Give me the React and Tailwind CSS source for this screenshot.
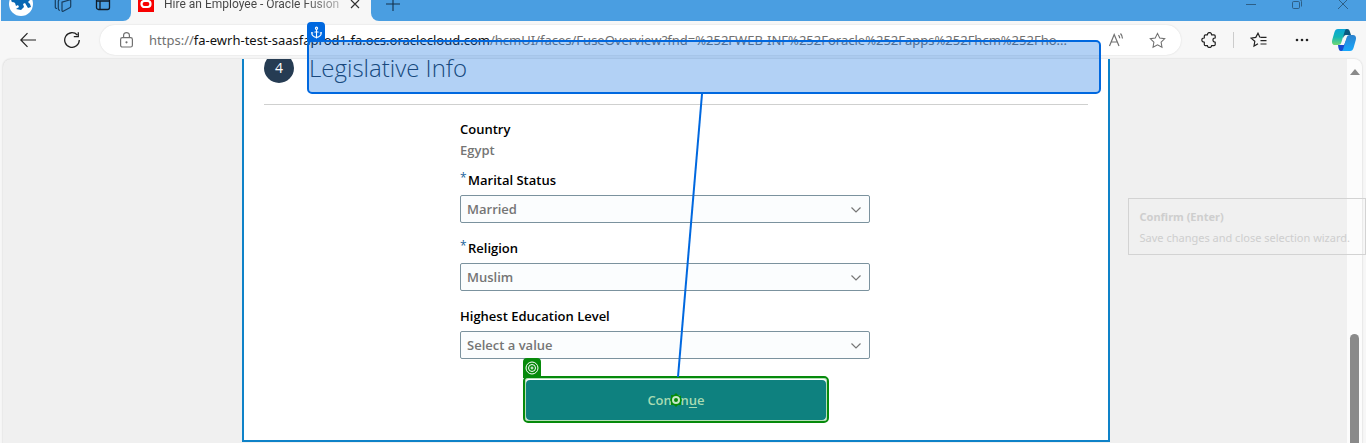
import React from "react";
import { Anchor } from "lucide-react";

const iconButton = "flex h-8 w-8 shrink-0 items-center justify-center";

function TabStrip() {
  return (
    <header className="flex h-[21px] items-end overflow-hidden bg-[#f7f7f7] pl-px">
      <div className="flex h-[34px] w-[130px] shrink-0 items-center gap-3 rounded-br-lg bg-[#4a9ee1] pl-2">
        <button aria-label="Profile" className="mr-1 h-6 w-6 shrink-0 overflow-hidden rounded-full bg-white">
          <svg viewBox="0 0 24 24" className="h-6 w-6">
            <path d="M2 9c2 2 3 1 4 2l1 3 2-1 1 2-3 2 5 1 3-3-1-3 2-1 3 5 3-1-1-3-2-2 2-2-3-5H6z" fill="#0868b4" />
          </svg>
        </button>
        <button aria-label="Workspaces" className="flex w-7 justify-center">
          <svg viewBox="0 0 18 18" className="h-[18px] w-[18px]" fill="none" stroke="#193f60" strokeWidth="1.2">
            <path d="M8 7.2 15.5 5c.7-.2 1.200.2 1.200.8v5.400c0 .8-.3 1.200-1 1.500l-6.500 3.500c-.7.3-1.200 0-1.200-.7V8c0-.4 0-.7 0-.8Z" />
            <path d="M6 15.300c-1.200 0-1.700-.5-1.700-1.500V6.500c0-1 .5-1.700 1.500-2L11 3M3 13.500c-1.200 0-1.700-.5-1.700-1.500V5c0-1 .5-1.700 1.500-2L7 1.500" />
          </svg>
        </button>
        <button aria-label="Tab actions" className="flex w-7 justify-center">
          <svg viewBox="0 0 16 16" className="h-4 w-4" fill="none" stroke="#101c28" strokeWidth="1.300">
            <rect x="1.500" y="1.500" width="13" height="12" rx="2" />
            <path d="M1.500 5h13M5 5v8.500" />
          </svg>
        </button>
      </div>
      <div className="flex h-[34px] w-60 shrink-0 items-center bg-[#f7f7f7] pl-[7px]">
        <svg viewBox="0 0 16 16" className="h-4 w-4 shrink-0">
          <rect width="16" height="16" fill="#f80000" />
          <rect x="3.500" y="5" width="9" height="6" rx="3" fill="none" stroke="#fff" strokeWidth="2.200" />
        </svg>
        <span className="ml-2.5 w-[186px] shrink-0 bg-linear-to-r from-[#444] from-75% to-[#444]/20 bg-clip-text font-[Roboto,sans-serif] text-[12px] leading-5 whitespace-nowrap text-transparent">
          Hire an Employee - Oracle Fusion
        </span>
        <button aria-label="Close tab">
          <svg viewBox="0 0 10 10" className="h-2.5 w-2.5" stroke="#333" strokeWidth="1.200">
            <path d="m1 1 8 8M9 1 1 9" />
          </svg>
        </button>
      </div>
      <div className="flex h-[34px] min-w-0 flex-1 items-center rounded-bl-lg bg-[#4a9ee1] pr-[18px] pl-[15px]">
        <button aria-label="New tab">
          <svg viewBox="0 0 14 14" className="h-3.5 w-3.5" stroke="#14314b" strokeWidth="1.100">
            <path d="M7 0v14M0 7h14" />
          </svg>
        </button>
        <div className="ml-auto flex items-center gap-9">
          <button aria-label="Minimize">
            <svg viewBox="0 0 10 10" className="h-2.5 w-2.5" stroke="#2d5f87"><path d="M0 5.500h10" /></svg>
          </button>
          <button aria-label="Restore">
            <svg viewBox="0 0 10 10" className="h-2.5 w-2.5" fill="none" stroke="#2d5f87">
              <rect x=".5" y="2.500" width="7" height="7" rx="1.200" />
              <path d="M2.500.5h5a2 2 0 0 1 2 2v5" />
            </svg>
          </button>
          <button aria-label="Close window">
            <svg viewBox="0 0 10 10" className="h-2.5 w-2.5" stroke="#2d5f87"><path d="m0 0 10 10M10 0 0 10" /></svg>
          </button>
        </div>
      </div>
    </header>
  );
}

const starPath = "m8 1.300 2.100 4.300 4.700.7-3.400 3.300.8 4.700L8 12.100l-4.200 2.200.8-4.700L1.200 6.300l4.700-.7Z";

function Toolbar() {
  return (
    <nav className="flex h-[38px] items-center bg-[#f7f7f7] pr-1.5 pl-3">
      <button aria-label="Back" className={iconButton}>
        <svg viewBox="0 0 16 16" className="h-4 w-4" fill="none" stroke="#222" strokeWidth="1.200">
          <path d="M16 8H.8M7.500 1.200.8 8l6.700 6.800" />
        </svg>
      </button>
      <button aria-label="Refresh" className={`${iconButton} ml-3`}>
        <svg viewBox="0 0 16 16" className="h-4 w-4" fill="none" stroke="#222" strokeWidth="1.300">
          <path d="M13.300 3A7.300 7.300 0 1 0 15.300 8M14.300.3v4.400H9.800" />
        </svg>
      </button>
      <div className="ml-3 flex h-[30px] min-w-0 flex-1 items-center rounded-full bg-white pr-2 pl-5 shadow-[0_0_2px_#0002]">
        <svg viewBox="0 0 13 16" className="h-4 w-[13px] shrink-0" fill="none" stroke="#707070" strokeWidth="1.200">
          <rect x=".6" y="5.600" width="11.800" height="9.400" rx="1.800" />
          <path d="M3.600 5.600V3.300c0-3.500 5.800-3.500 5.800 0v2.300" />
          <circle cx="6.500" cy="10.300" r=".5" fill="#555" />
        </svg>
        <div className="ml-4 min-w-0 flex-1 font-['Noto_Sans',sans-serif] text-[13px] leading-5 whitespace-nowrap text-[#707070]">
          https://<span className="text-[#111]">fa-ewrh-test-saasfaprod1.fa.ocs.oraclecloud.com</span>/hcmUI/faces/FuseOverview?fnd=%252FWEB-INF%252Foracle%252Fapps%252Fhcm%252Fho...
        </div>
        <button aria-label="Read aloud" className={iconButton}>
          <svg viewBox="0 0 18 16" className="h-4 w-[18px]" fill="none" stroke="#707070" strokeWidth="1.200">
            <path d="m1.500 14 4.700-11.500L11 14M3.200 10h6M10.500 3.200a5 5 0 0 1 1.200 3M12.500 1.500a8 8 0 0 1 2 5" />
          </svg>
        </button>
        <button aria-label="Add to favorites" className={`${iconButton} ml-2`}>
          <svg viewBox="0 0 16 16" className="h-[17px] w-[17px]" fill="none" stroke="#707070"><path d={starPath} /></svg>
        </button>
      </div>
      <button aria-label="Extensions" className={`${iconButton} ml-3`}>
        <svg viewBox="0 0 16 16" className="h-4 w-4" fill="none" stroke="#222" strokeWidth="1.200" strokeLinejoin="round">
          <path d="M4.500 2.800h2c-.3-3 4.300-3 4 0H13c.8 0 1.200.4 1.200 1.200v2c-3-.3-3 4.300 0 4v2.500c0 .8-.4 1.200-1.200 1.200h-2.500c.3 2.200-4.300 2.200-4 0h-2c-.8 0-1.200-.4-1.200-1.200V10c-3.300.3-3.300-4.300 0-4V4c0-.8.4-1.200 1.200-1.200Z" />
        </svg>
      </button>
      <span className="mx-2 h-4 w-px bg-[#ccc]" />
      <button aria-label="Favorites" className={iconButton}>
        <svg viewBox="0 0 17 16" className="h-4 w-[17px]" fill="none" stroke="#222" strokeWidth="1.200">
          <path d="M10 5.400 8 1.200 5.800 5.400 1 6.100l3.800 3.200L4 14l4-2.300M10.500 5.400h6M10.500 8.700h6M10.500 12h6" />
        </svg>
      </button>
      <button aria-label="Settings and more" className={`${iconButton} ml-3`}>
        <svg viewBox="0 0 14 4" className="h-1 w-3.5" fill="#222">
          <circle cx="2" cy="2" r="1.300" /><circle cx="7" cy="2" r="1.300" /><circle cx="12" cy="2" r="1.300" />
        </svg>
      </button>
      <button aria-label="Copilot" className={`${iconButton} ml-2.5`}>
        <svg viewBox="0 0 24 22" className="h-[22px] w-6">
          <defs>
            <linearGradient id="copilotLeft" x1="0" y1="0" x2="0" y2="1">
              <stop stopColor="#0aa5d8" /><stop offset=".5" stopColor="#12b7b5" /><stop offset="1" stopColor="#72d873" />
            </linearGradient>
            <linearGradient id="copilotRight" x1="0" y1="0" x2="0" y2="1">
              <stop stopColor="#2c82cd" /><stop offset="1" stopColor="#16a8fd" />
            </linearGradient>
          </defs>
          <path d="M10 0h5c2 0 2.500 1 3 3l1 3h-5c-1.500 0-2 1-2.500 3Z" fill="#08577e" />
          <path d="M6 16h6l3-7 1 10c-.5 2-1.500 3-3 3H9c-2 0-2.500-2-3-6Z" fill="#174bd0" />
          <path d="M6 0h9c-1.500 0-2 1-2.500 3L9.500 13c-.6 2-1.200 3-3.500 3H3c-2.500 0-3.500-2-2.800-5L2.500 3C3.200 1 4 0 6 0Z" fill="url(#copilotLeft)" />
          <path d="M18 22H9c1.500 0 2-1 2.500-3l3-10c.6-2 1.200-3 3.500-3h3c2.500 0 3.500 2 2.800 5l-2.300 8c-.7 2-1.500 3-3.500 3Z" fill="url(#copilotRight)" />
        </svg>
      </button>
    </nav>
  );
}

function SelectField({ id, label, value, required }) {
  return (
    <div className="mb-[15px]">
      <label htmlFor={id} className="flex h-5 text-[13px] leading-5 font-semibold text-black">
        {required && <span className="w-2 text-[12px] leading-4 font-normal text-[#23659b]">*</span>}
        {label}
      </label>
      <div className="relative mt-[5px] flex">
        <select
          id={id}
          className="h-7 w-full appearance-none rounded-xs border border-[#7b929e] bg-[#fbfdfe] px-1.5 pt-0.5 text-[13px] font-semibold text-[#757575]"
        >
          <option>{value}</option>
        </select>
        <svg viewBox="0 0 10 6" className="pointer-events-none absolute top-3 right-[9px] h-1.5 w-2.5" fill="none" stroke="#777" strokeWidth="1.200">
          <path d="m.5.5 4.500 4.500L9.500.5" />
        </svg>
      </div>
    </div>
  );
}

function SectionHeading() {
  return (
    <div className="relative flex h-[46px] items-start border-b border-[#cfd0cf]">
      <div className="flex h-6 items-end overflow-hidden">
        <span className="flex h-[30px] w-[30px] shrink-0 items-center justify-center rounded-full bg-[#263c53] text-sm text-white">4</span>
      </div>
      <h2 className="ml-[15px] text-2xl leading-[18px] font-light text-[#263c53]">Legislative Info</h2>
      <div className="absolute -top-[19px] -right-[13px] left-[43px] h-[54px] rounded-[5px] border-2 border-[#0068df] bg-[#0068df]/30">
        <span className="absolute -top-5 -left-0.5 flex h-5 w-[18px] items-center justify-center rounded-t bg-[#0068df] text-white">
          <Anchor size={13} strokeWidth={2} />
        </span>
      </div>
    </div>
  );
}

function ContinueButton() {
  return (
    <div className="relative mx-auto w-[300px]">
      <button className="h-10 w-full rounded bg-[#0e817f] pt-0.5 text-[13px] font-semibold text-[#a8dbb2]">
        Contin<span className="underline underline-offset-2">u</span>e
      </button>
      <div className="pointer-events-none absolute -inset-x-[3px] -top-1 -bottom-[3px] rounded-[5px] border-2 border-[#068a0b] shadow-[inset_0_0_0_1px_#b5dfb8]">
        <span className="absolute -top-5 -left-0.5 flex h-5 w-[18px] items-center justify-center rounded-t bg-[#068a0b]">
          <svg viewBox="0 0 14 14" className="h-3.5 w-3.5" fill="none" stroke="#fff">
            <circle cx="7" cy="7" r="6" /><circle cx="7" cy="7" r="3.500" /><circle cx="7" cy="7" r="1" />
          </svg>
        </span>
        <span className="absolute inset-0 flex items-center justify-center">
          <svg viewBox="0 0 14 14" className="h-3.5 w-3.5">
            <path d="m7 0 2 2 3 1v3l1 1-1 2v3H9l-2 2-2-2H2V9L1 7l1-2V2h3Z" fill="#068a0b" />
            <circle cx="7" cy="7" r="3" fill="none" stroke="#c6e8c8" strokeWidth="2" />
          </svg>
        </span>
      </div>
    </div>
  );
}

export default function App() {
  return (
    <div className="relative overflow-hidden bg-[#f7f7f7] font-['Open_Sans',sans-serif]">
      <TabStrip />
      <Toolbar />
      <div className="mr-1 ml-[3px] flex rounded-t-lg bg-[#f0f0f0] shadow-[0_0_2px_#0003]">
        <main className="min-w-0 flex-1 pb-[3px] pl-0.5">
          <section className="relative mx-auto w-[868px] border-2 border-t-0 border-[#0e82c8] bg-white px-5 pb-5">
            <SectionHeading />
            <form className="mt-3.5 ml-[196px] w-[410px]" onSubmit={(e) => e.preventDefault()}>
              <dl className="mb-[9px] text-[13px] font-semibold">
                <dt className="leading-5 text-black">Country</dt>
                <dd className="leading-[22px] text-[#757575]">Egypt</dd>
              </dl>
              <SelectField id="marital" label="Marital Status" value="Married" required />
              <SelectField id="religion" label="Religion" value="Muslim" required />
              <SelectField id="education" label="Highest Education Level" value="Select a value" />
            </form>
            <div className="pt-1.5"><ContinueButton /></div>
            <svg viewBox="0 0 26 283" className="pointer-events-none absolute top-[35px] left-[433px] h-[283px] w-[26px]">
              <path d="M25 0 1 283" stroke="#0068df" strokeWidth="2" />
            </svg>
          </section>
        </main>
        <div className="flex w-[15px] shrink-0 flex-col items-center rounded-tr-lg bg-[#fcfcfc] pt-2.5">
          <svg viewBox="0 0 10 6" className="h-1.5 w-2.5"><path d="M5 0l5 6H0Z" fill="#8a8a8a" /></svg>
          <div className="mt-[259px] w-[9px] flex-1 rounded-t-full bg-[#8a8a8a]" />
        </div>
      </div>
      <aside className="absolute top-[198px] right-0 border border-[#d3d3d3] px-[11px] pt-[7px] pb-1.5 font-['Noto_Sans',sans-serif] text-[11px] leading-[21px] whitespace-nowrap text-[#cecece]">
        <p className="font-bold">Confirm (Enter)</p>
        <p className="pr-1">Save changes and close selection wizard.</p>
      </aside>
    </div>
  );
}
